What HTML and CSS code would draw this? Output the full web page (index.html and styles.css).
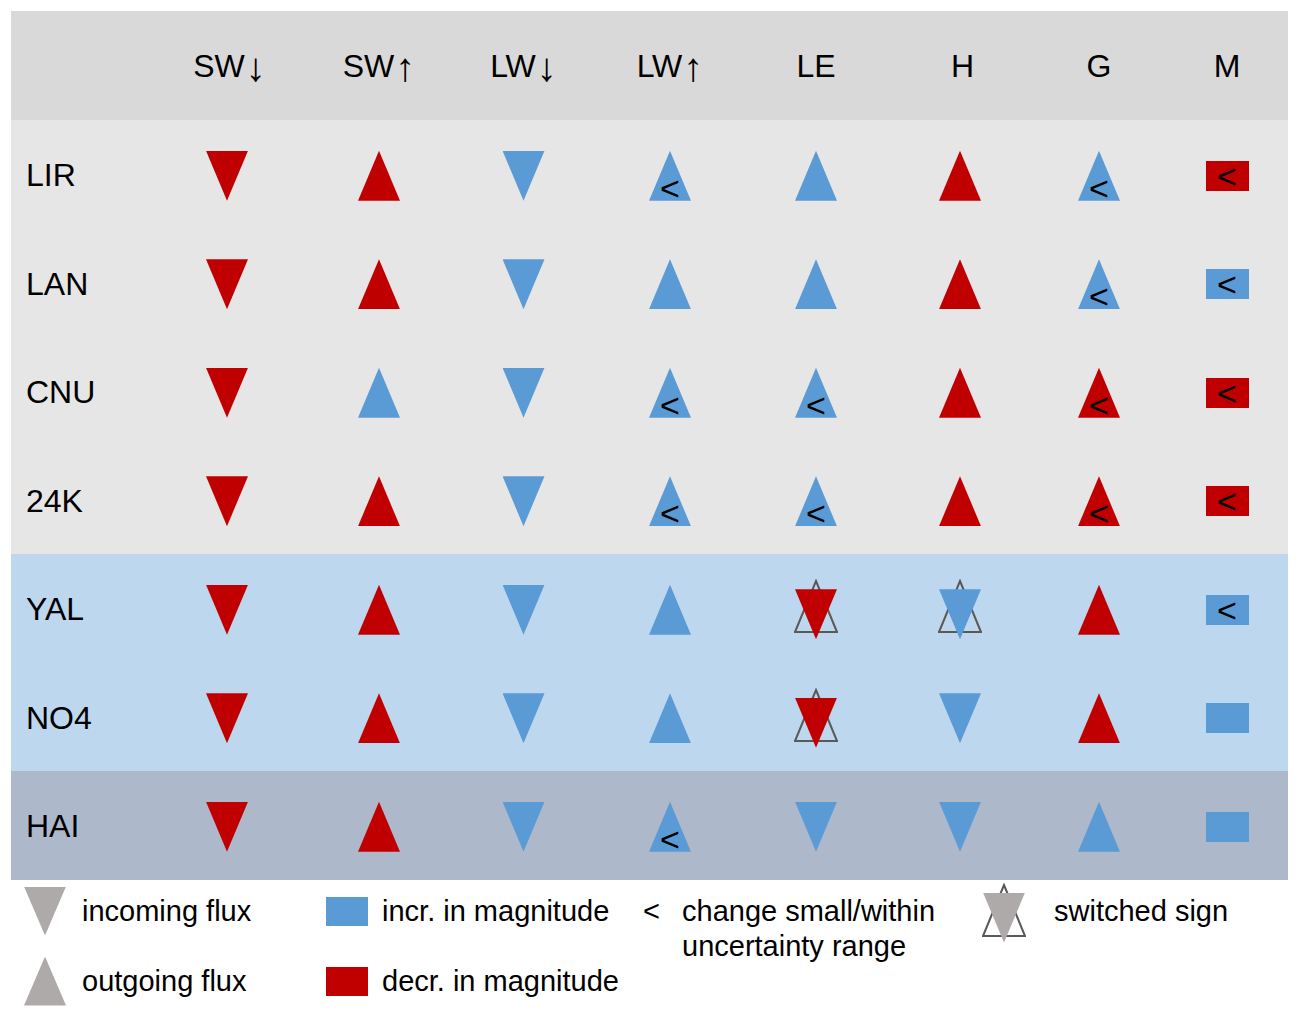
FILE: index.html
```html
<!DOCTYPE html>
<html>
<head>
<meta charset="utf-8">
<title>Flux changes</title>
<link rel="stylesheet" href="styles.css">
</head>
<body>
<div class="panel">
  <div class="row head">
    <div class="lab"></div>
    <div class="hc sh">SW<span class="ar">↓</span></div>
    <div class="hc">SW<span class="ar">↑</span></div>
    <div class="hc">LW<span class="ar">↓</span></div>
    <div class="hc">LW<span class="ar">↑</span></div>
    <div class="hc">LE</div>
    <div class="hc sh">H</div>
    <div class="hc">G</div>
    <div class="hc">M</div>
  </div>

  <div class="row gray">
    <div class="lab">LIR</div>
    <div class="c"><div class="mk dn r"></div></div>
    <div class="c"><div class="mk up r"></div></div>
    <div class="c"><div class="mk dn b"></div></div>
    <div class="c"><div class="mk up b"><span class="lt">&lt;</span></div></div>
    <div class="c"><div class="mk up b"></div></div>
    <div class="c"><div class="mk up r"></div></div>
    <div class="c"><div class="mk up b"><span class="lt">&lt;</span></div></div>
    <div class="c"><div class="box r">&lt;</div></div>
  </div>

  <div class="row gray">
    <div class="lab">LAN</div>
    <div class="c"><div class="mk dn r"></div></div>
    <div class="c"><div class="mk up r"></div></div>
    <div class="c"><div class="mk dn b"></div></div>
    <div class="c"><div class="mk up b"></div></div>
    <div class="c"><div class="mk up b"></div></div>
    <div class="c"><div class="mk up r"></div></div>
    <div class="c"><div class="mk up b"><span class="lt">&lt;</span></div></div>
    <div class="c"><div class="box b">&lt;</div></div>
  </div>

  <div class="row gray">
    <div class="lab">CNU</div>
    <div class="c"><div class="mk dn r"></div></div>
    <div class="c"><div class="mk up b"></div></div>
    <div class="c"><div class="mk dn b"></div></div>
    <div class="c"><div class="mk up b"><span class="lt">&lt;</span></div></div>
    <div class="c"><div class="mk up b"><span class="lt">&lt;</span></div></div>
    <div class="c"><div class="mk up r"></div></div>
    <div class="c"><div class="mk up r"><span class="lt">&lt;</span></div></div>
    <div class="c"><div class="box r">&lt;</div></div>
  </div>

  <div class="row gray">
    <div class="lab">24K</div>
    <div class="c"><div class="mk dn r"></div></div>
    <div class="c"><div class="mk up r"></div></div>
    <div class="c"><div class="mk dn b"></div></div>
    <div class="c"><div class="mk up b"><span class="lt">&lt;</span></div></div>
    <div class="c"><div class="mk up b"><span class="lt">&lt;</span></div></div>
    <div class="c"><div class="mk up r"></div></div>
    <div class="c"><div class="mk up r"><span class="lt">&lt;</span></div></div>
    <div class="c"><div class="box r">&lt;</div></div>
  </div>

  <div class="row blue">
    <div class="lab">YAL</div>
    <div class="c"><div class="mk dn r"></div></div>
    <div class="c"><div class="mk up r"></div></div>
    <div class="c"><div class="mk dn b"></div></div>
    <div class="c"><div class="mk up b"></div></div>
    <div class="c"><div class="sw"><svg class="ol" width="44" height="55" viewBox="0 0 44 55"><polygon points="22,2 43,53 1,53"/></svg><div class="mk dn r"></div></div></div>
    <div class="c"><div class="sw"><svg class="ol" width="44" height="55" viewBox="0 0 44 55"><polygon points="22,2 43,53 1,53"/></svg><div class="mk dn b"></div></div></div>
    <div class="c"><div class="mk up r"></div></div>
    <div class="c"><div class="box b">&lt;</div></div>
  </div>

  <div class="row blue">
    <div class="lab">NO4</div>
    <div class="c"><div class="mk dn r"></div></div>
    <div class="c"><div class="mk up r"></div></div>
    <div class="c"><div class="mk dn b"></div></div>
    <div class="c"><div class="mk up b"></div></div>
    <div class="c"><div class="sw"><svg class="ol" width="44" height="55" viewBox="0 0 44 55"><polygon points="22,2 43,53 1,53"/></svg><div class="mk dn r"></div></div></div>
    <div class="c"><div class="mk dn b"></div></div>
    <div class="c"><div class="mk up r"></div></div>
    <div class="c"><div class="box b"></div></div>
  </div>

  <div class="row slate">
    <div class="lab">HAI</div>
    <div class="c"><div class="mk dn r"></div></div>
    <div class="c"><div class="mk up r"></div></div>
    <div class="c"><div class="mk dn b"></div></div>
    <div class="c"><div class="mk up b"><span class="lt">&lt;</span></div></div>
    <div class="c"><div class="mk dn b"></div></div>
    <div class="c"><div class="mk dn b"></div></div>
    <div class="c"><div class="mk up b"></div></div>
    <div class="c"><div class="box b"></div></div>
  </div>
</div>

<div class="legend">
  <div class="lg lg1">
    <div class="item"><div class="mk dn g"></div><span>incoming flux</span></div>
    <div class="item"><div class="mk up g"></div><span>outgoing flux</span></div>
  </div>
  <div class="lg lg2">
    <div class="item"><div class="sq b"></div><span>incr. in magnitude</span></div>
    <div class="item"><div class="sq r"></div><span>decr. in magnitude</span></div>
  </div>
  <div class="lg lg3">
    <span class="lsym">&lt;</span>
    <span class="ltext">change small/within<br>uncertainty range</span>
  </div>
  <div class="lg lg4">
    <div class="sw lsw"><svg class="ol" width="44" height="55" viewBox="0 0 44 55"><polygon points="22,2 43,53 1,53"/></svg><div class="mk dn g"></div></div>
    <span class="ltext">switched sign</span>
  </div>
</div>
</body>
</html>
```

FILE: styles.css
```css
html, body {
  margin: 0;
  padding: 0;
  background: #ffffff;
}

body {
  font-family: "Liberation Sans", Arial, sans-serif;
  color: #000000;
}

.panel {
  margin: 11px 0 0 11px;
  width: 1277px;
}

.row {
  display: grid;
  grid-template-columns: 136px 160px 144px 145px 148px 144px 144px 134px 122px;
  align-items: center;
  height: 108.5px;
}

.row.head {
  height: 109px;
  background: #d9d9d9;
}

.row.gray { background: #e6e6e6; }
.row.blue { background: #bdd7ee; }
.row.slate { background: #adb9ca; }

.hc {
  text-align: center;
  font-size: 32px;
  line-height: 1;
}

.hc.sh {
  padding-left: 5px;
}

.ar {
  font-size: 40px;
  line-height: 0;
  vertical-align: -4px;
  margin-left: 1px;
}

.lab {
  font-size: 32px;
  line-height: 1;
  padding-left: 15px;
  padding-top: 2px;
}

.c {
  display: flex;
  justify-content: center;
  align-items: center;
  padding-top: 3px;
}

.r { --c: #c00000; }
.b { --c: #5b9bd5; }
.g { --c: #aeaaaa; }

.mk {
  position: relative;
  width: 42px;
  height: 50px;
  flex: none;
}

.mk::before {
  content: "";
  position: absolute;
  inset: 0;
  background: var(--c);
}

.mk.up::before { clip-path: polygon(50% 0, 100% 100%, 0 100%); }
.mk.dn::before { clip-path: polygon(0 0, 100% 0, 50% 100%); }

.lt {
  position: absolute;
  left: 0;
  right: 0;
  bottom: -4px;
  text-align: center;
  font-size: 34px;
  line-height: 34px;
}

.box {
  width: 43px;
  height: 30px;
  background: var(--c);
  display: flex;
  justify-content: center;
  align-items: center;
  font-size: 34px;
  line-height: 30px;
}

.sw {
  position: relative;
  width: 44px;
  height: 61px;
  flex: none;
}

.sw .ol {
  position: absolute;
  left: 0;
  top: 0;
}

.ol polygon {
  fill: none;
  stroke: #595959;
  stroke-width: 2;
}

.sw .mk {
  position: absolute;
  left: 1px;
  top: 10px;
}

/* legend */
.legend {
  display: flex;
  padding: 7px 0 0 24px;
  font-size: 29px;
}

.lg {
  display: flex;
  flex: none;
}

.lg1, .lg2 {
  flex-direction: column;
  gap: 21px;
}

.lg1 { width: 302px; }
.lg2 { width: 317px; }
.lg3 { width: 339px; }

.item {
  display: flex;
  align-items: center;
  height: 49px;
}

.lg1 .item { gap: 16px; }
.lg1 .mk { height: 49px; }

.sq {
  width: 42px;
  height: 29px;
  background: var(--c);
  flex: none;
}

.lg2 .item { gap: 14px; }

.lsym {
  width: 39px;
  line-height: 35px;
  margin-top: 7px;
}

.ltext {
  line-height: 35px;
  margin-top: 7px;
}

.lsw {
  margin-top: -4px;
  margin-right: 28px;
}
```
